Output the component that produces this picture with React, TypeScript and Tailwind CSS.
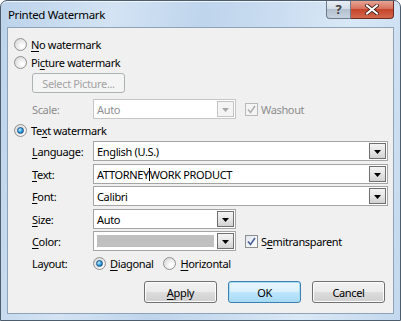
import React from "react";

type Kids = { children?: React.ReactNode };

// underlined access key
function K({ children }: Kids) {
  return <span className="underline decoration-1 underline-offset-[2px]">{children}</span>;
}

function Radio({ checked }: { checked?: boolean }) {
  return (
    <span className="w-[13px] h-[13px] shrink-0 rounded-full border border-[#929292] bg-[radial-gradient(circle_at_65%_65%,#ffffff_10%,#d4d4d4_90%)] flex items-center justify-center">
      {checked && (
        <span className="w-[7px] h-[7px] rounded-full border border-[#1c5180] bg-[radial-gradient(circle_at_35%_35%,#bdeeff,#2b9be0_55%,#0b5a96)]" />
      )}
    </span>
  );
}

function Check({ disabled }: { disabled?: boolean }) {
  return (
    <span
      className={
        disabled
          ? "w-[13px] h-[13px] shrink-0 border border-[#b8b8b8] bg-[#f4f4f4] flex items-center justify-center"
          : "w-[13px] h-[13px] shrink-0 border border-[#8e8f8f] bg-gradient-to-br from-[#e1e6ee] to-[#ffffff] flex items-center justify-center"
      }
    >
      <svg width="9" height="9" viewBox="0 0 9 9">
        <path d="M1 4.5 L3.5 7.5 L8 1" fill="none" stroke={disabled ? "#b0b0b0" : "#4a5f97"} strokeWidth="1.6" />
      </svg>
    </span>
  );
}

function DropBtn({ disabled }: { disabled?: boolean }) {
  return (
    <span
      className={
        disabled
          ? "w-[17px] h-full shrink-0 border border-[#c4c4c4] bg-[#f4f4f4] flex items-center justify-center"
          : "w-[17px] h-full shrink-0 border border-[#707070] bg-gradient-to-b from-[#f4f4f4] via-[#e6e6e6] to-[#d2d2d2] flex items-center justify-center"
      }
    >
      <svg width="7" height="4" viewBox="0 0 7 4" className="mt-[2px]">
        <path d="M0 0 H7 L3.5 4 Z" fill={disabled ? "#a8a8a8" : "#000"} />
      </svg>
    </span>
  );
}

function Combo({ className, children, disabled }: Kids & { className: string; disabled?: boolean }) {
  return (
    <div
      className={
        (disabled ? "border-[#c6c6c6] text-[#8f8f8f] " : "border-[#a5a5a5] text-black ") +
        "h-[20px] flex bg-white border p-[1px] " +
        className
      }
    >
      <div className="flex-1 flex items-center pl-[2px] overflow-hidden whitespace-nowrap">{children}</div>
      <DropBtn disabled={disabled} />
    </div>
  );
}

function Field({ label, children }: Kids & { label: React.ReactNode }) {
  return (
    <div className="flex items-center">
      <div className="w-[61px] pl-[24px] box-content">{label}</div>
      {children}
    </div>
  );
}

function Btn({ children, primary }: Kids & { primary?: boolean }) {
  return (
    <div
      className={
        primary
          ? "w-[73px] h-[22px] rounded-[3px] border border-[#3c7fb1] shadow-[inset_0_0_0_1px_#a7dcf5] bg-[linear-gradient(#eaf6fd_0%,#d9f0fc_50%,#bee6fd_51%,#a7d9f5_100%)] flex items-center justify-center"
          : "w-[73px] h-[22px] rounded-[3px] border border-[#707070] shadow-[inset_0_0_0_1px_#fcfcfc] bg-[linear-gradient(#f2f2f2_0%,#ebebeb_50%,#dddddd_51%,#cfcfcf_100%)] flex items-center justify-center"
      }
    >
      {children}
    </div>
  );
}

export default function App() {
  return (
    <div className="w-[401px] h-[321px] font-['Segoe_UI','Noto_Sans',sans-serif] text-[11px] leading-none text-black tracking-[-0.35px]">
      <div className="w-full h-full rounded-t-[7px] border border-[#4d5d6e] bg-[linear-gradient(100deg,#bcd3ea_0%,#d3e3f4_25%,#bfd5ec_45%,#c9dcf0_60%,#d9e8f6_78%,#c3d8ee_100%)] flex flex-col shadow-[inset_0_1px_0_#eef5fc]">
        {/* title bar */}
        <div className="h-[26px] flex items-start">
          <div className="pl-[7px] pt-[8px] text-black text-[11.5px]">Printed Watermark</div>
          <div className="ml-auto mr-[6px] flex">
            <div className="w-[25px] h-[18px] rounded-bl-[4px] border border-[#6d7b8a] border-t-0 bg-[linear-gradient(#e8eef5_0%,#d4dde7_45%,#b3c0ce_50%,#c7d3df_100%)] flex items-center justify-center text-[#444] text-[13px] font-bold">
              ?
            </div>
            <div className="w-[43px] h-[18px] rounded-br-[4px] border border-[#6e2a22] border-t-0 border-l-0 bg-[linear-gradient(#e8a493_0%,#d7735e_45%,#c7452b_50%,#d2694c_100%)] flex items-center justify-center">
              <svg width="14" height="11" viewBox="0 0 14 11">
                <path d="M2 1.5 L12 9.5 M12 1.5 L2 9.5" stroke="#3b1a14" strokeWidth="3.6" strokeLinecap="square" />
                <path d="M2 1.5 L12 9.5 M12 1.5 L2 9.5" stroke="#ffffff" strokeWidth="2" strokeLinecap="square" />
              </svg>
            </div>
          </div>
        </div>

        {/* client area */}
        <div className="mx-[6px] h-[287px] border border-[#8ea3b8] bg-[#f0f0f0] flex flex-col">
          <div className="h-[7px]" />
          <div className="h-[18px] flex items-center pl-[6px] gap-[4px]">
            <Radio />
            <span>
              <K>N</K>o watermark
            </span>
          </div>
          <div className="h-[18px] flex items-center pl-[6px] gap-[4px]">
            <Radio />
            <span>
              Pi<K>c</K>ture watermark
            </span>
          </div>
          <div className="mt-[2px] ml-[24px] w-[93px] h-[20px] rounded-[3px] border border-[#adb2b5] bg-[#f4f4f4] flex items-center justify-center text-[#a3a3a3]">
            Select Picture...
          </div>
          <div className="mt-[6px]">
            <Field label={<span className="text-[#8d8d8d]">Scale:</span>}>
              <Combo className="w-[143px]" disabled>
                Auto
              </Combo>
              <div className="ml-[9px] flex items-center gap-[3px] text-[#8d8d8d]">
                <Check disabled />
                <span>Washout</span>
              </div>
            </Field>
          </div>
          <div className="mt-[2px] h-[18px] flex items-center pl-[6px] gap-[4px]">
            <Radio checked />
            <span>
              Te<K>x</K>t watermark
            </span>
          </div>
          <div className="mt-[2px]">
            <Field
              label={
                <span>
                  <K>L</K>anguage:
                </span>
              }
            >
              <Combo className="w-[295px]">English (U.S.)</Combo>
            </Field>
          </div>
          <div className="mt-[3px]">
            <Field
              label={
                <span>
                  <K>T</K>ext:
                </span>
              }
            >
              <Combo className="w-[295px]">
                ATTORNEY<span className="inline-block w-[1px] h-[13px] bg-black" />WORK PRODUCT
              </Combo>
            </Field>
          </div>
          <div className="mt-[2px]">
            <Field
              label={
                <span>
                  <K>F</K>ont:
                </span>
              }
            >
              <Combo className="w-[295px]">Calibri</Combo>
            </Field>
          </div>
          <div className="mt-[3px]">
            <Field
              label={
                <span>
                  <K>S</K>ize:
                </span>
              }
            >
              <Combo className="w-[143px]">Auto</Combo>
            </Field>
          </div>
          <div className="mt-[2px]">
            <Field
              label={
                <span>
                  <K>C</K>olor:
                </span>
              }
            >
              <div className="w-[143px] h-[20px] flex bg-white border border-[#a5a5a5] p-[1px]">
                <div className="flex-1 p-[2px] pr-[3px]">
                  <div className="w-full h-full bg-[#c0c0c0]" />
                </div>
                <DropBtn />
              </div>
              <div className="ml-[9px] flex items-center gap-[3px]">
                <Check />
                <span>
                  S<K>e</K>mitransparent
                </span>
              </div>
            </Field>
          </div>
          <div className="mt-[3px] h-[18px] flex items-center">
            <div className="w-[61px] pl-[24px] box-content">Layout:</div>
            <div className="flex items-center gap-[4px]">
              <Radio checked />
              <span>
                <K>D</K>iagonal
              </span>
            </div>
            <div className="ml-[10px] flex items-center gap-[4px]">
              <Radio />
              <span>
                <K>H</K>orizontal
              </span>
            </div>
          </div>
          <div className="mt-[9px] pr-[8px] flex justify-end gap-[11px]">
            <Btn>
              <K>A</K>pply
            </Btn>
            <Btn primary>OK</Btn>
            <Btn>Cancel</Btn>
          </div>
        </div>
      </div>
    </div>
  );
}
